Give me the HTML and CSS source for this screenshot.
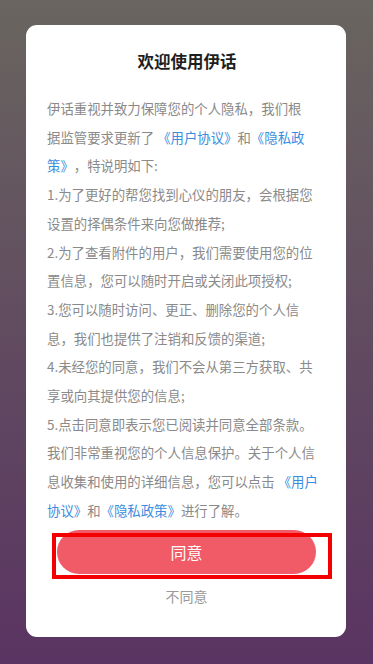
FILE: index.html
```html
<!DOCTYPE html>
<html lang="zh-CN">

<head>
    <meta charset="UTF-8">
    <meta name="viewport" content="width=device-width, initial-scale=1.0">
    <title>欢迎使用伊话</title>
    <link rel="stylesheet" href="styles.css">
</head>

<body>
    <div class="dialog">
        <h1 class="title">欢迎使用伊话</h1>
        <div class="content">
            <p>伊话重视并致力保障您的个人隐私，我们根<br>据监管要求更新了 <a class="link">《用户协议》</a>和<a class="link">《隐私政<br>策》</a>，特说明如下:</p>
            <p>1.为了更好的帮您找到心仪的朋友，会根据您<br>设置的择偶条件来向您做推荐;</p>
            <p>2.为了查看附件的用户，我们需要使用您的位<br>置信息，您可以随时开启或关闭此项授权;</p>
            <p>3.您可以随时访问、更正、删除您的个人信<br>息，我们也提供了注销和反馈的渠道;</p>
            <p>4.未经您的同意，我们不会从第三方获取、共<br>享或向其提供您的信息;</p>
            <p>5.点击同意即表示您已阅读并同意全部条款。</p>
            <p>我们非常重视您的个人信息保护。关于个人信<br>息收集和使用的详细信息，您可以点击 <a class="link">《用户<br>协议》</a>和<a class="link">《隐私政策》</a>进行了解。</p>
        </div>
        <div class="actions">
            <button type="button" class="btn_agree">同意</button>
            <div class="mark"></div>
            <button type="button" class="btn_refuse">不同意</button>
        </div>
    </div>
</body>

</html>
```

FILE: styles.css
```css
*,
::before,
::after {
    box-sizing: border-box;
    font-family: "Noto Sans CJK SC", "Noto Sans", sans-serif;
}

body {
    margin: unset;
    width: 100%;
    height: 100vh;
    background: linear-gradient(180deg, #69655f 0%, #624e60 45%, #5a3462 100%);
}

.dialog {
    margin: 0 27px 0 26px;
    position: relative;
    top: 25px;
    width: 320px;
    background-color: #fff;
    border-radius: 11px;
    padding: 24px 14px 31px 21px;
}

.title {
    margin: 0;
    text-align: center;
    font-size: 16.5px;
    line-height: 24px;
    font-weight: bold;
    color: #1e1e1e;
    padding-right: 5px;
}

.content {
    margin-top: 21px;
}

.content p {
    margin: 0;
    font-size: 13.4px;
    line-height: 28.7px;
    color: #8a8a8a;
    text-spacing-trim: space-all;
    white-space: nowrap;
}

.link {
    color: #3a8de0;
}

.actions {
    position: relative;
    display: flex;
    flex-direction: column;
    align-items: center;
    margin-top: 5px;
    padding-right: 6px;
}

.btn_agree {
    width: 259px;
    height: 44px;
    border: none;
    border-radius: 22px;
    background-color: #f15b68;
    color: #fff;
    font-size: 16px;
    padding: 0;
}

.mark {
    position: absolute;
    left: 5px;
    top: 3px;
    width: 280px;
    height: 46px;
    border: 4px solid #f50000;
}

.btn_refuse {
    margin-top: 12px;
    border: none;
    background: none;
    padding: 0;
    font-size: 14px;
    line-height: 20px;
    color: #9a9a9a;
}
```
